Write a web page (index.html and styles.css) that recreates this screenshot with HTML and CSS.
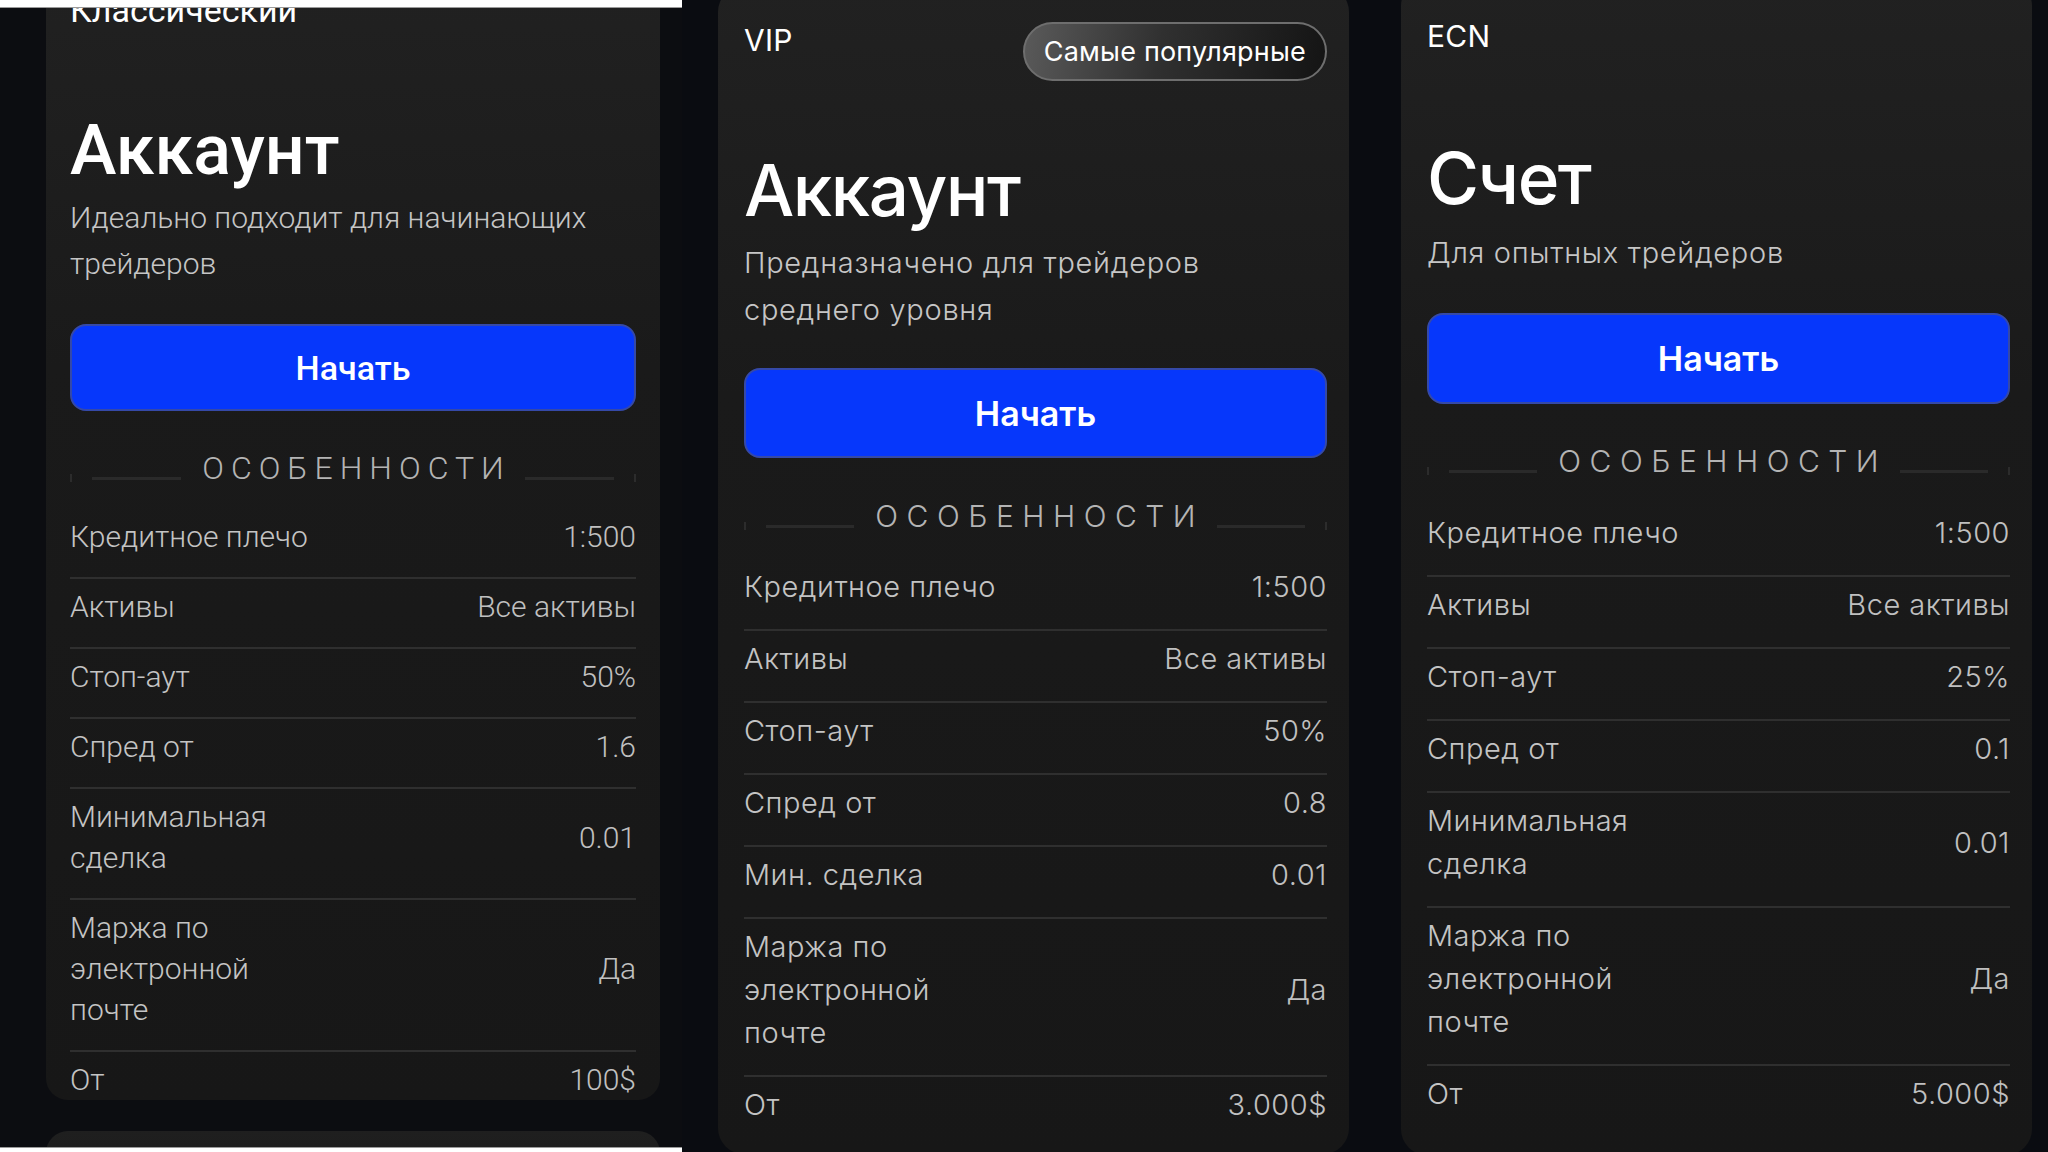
FILE: index.html
```html
<!DOCTYPE html>
<html lang="ru">
  <head>
    <meta charset="UTF-8" />
    <meta name="viewport" content="width=device-width, initial-scale=1.0" />
    <title>Типы счетов</title>
    <link rel="stylesheet" href="styles.css">
  </head>
  <body>
    <div class="screens">
      <!-- Classic account, Android screen -->
      <section class="screen screen-classic">
        <div class="bar bar-top"></div>
        <div class="plan plan-classic">
          <div class="plan-head">
            <span class="tier">Классический</span>
          </div>
          <h2 class="plan-title">Аккаунт</h2>
          <p class="plan-desc">Идеально подходит для начинающих<br>трейдеров</p>
          <a class="btn-start" href="#">Начать</a>
          <div class="features-title"><span>Особенности</span></div>
          <ul class="features">
            <li><span class="label">Кредитное плечо</span><span class="value">1:500</span></li>
            <li><span class="label">Активы</span><span class="value">Все активы</span></li>
            <li><span class="label">Стоп-аут</span><span class="value">50%</span></li>
            <li><span class="label">Спред от</span><span class="value">1.6</span></li>
            <li><span class="label">Минимальная<br>сделка</span><span class="value">0.01</span></li>
            <li><span class="label">Маржа по<br>электронной<br>почте</span><span class="value">Да</span></li>
            <li><span class="label">От</span><span class="value">100$</span></li>
          </ul>
        </div>
        <div class="plan plan-peek"></div>
        <div class="bar bar-bottom"></div>
      </section>

      <!-- VIP account -->
      <section class="screen screen-vip">
        <div class="plan plan-vip">
          <div class="plan-head">
            <span class="tier">VIP</span>
            <span class="badge">Самые популярные</span>
          </div>
          <h2 class="plan-title">Аккаунт</h2>
          <p class="plan-desc">Предназначено для трейдеров<br>среднего уровня</p>
          <a class="btn-start" href="#">Начать</a>
          <div class="features-title"><span>Особенности</span></div>
          <ul class="features">
            <li><span class="label">Кредитное плечо</span><span class="value">1:500</span></li>
            <li><span class="label">Активы</span><span class="value">Все активы</span></li>
            <li><span class="label">Стоп-аут</span><span class="value">50%</span></li>
            <li><span class="label">Спред от</span><span class="value">0.8</span></li>
            <li><span class="label">Мин. сделка</span><span class="value">0.01</span></li>
            <li><span class="label">Маржа по<br>электронной<br>почте</span><span class="value">Да</span></li>
            <li><span class="label">От</span><span class="value">3.000$</span></li>
          </ul>
        </div>
      </section>

      <!-- ECN account -->
      <section class="screen screen-ecn">
        <div class="plan plan-ecn">
          <div class="plan-head">
            <span class="tier">ECN</span>
          </div>
          <h2 class="plan-title">Счет</h2>
          <p class="plan-desc">Для опытных трейдеров</p>
          <a class="btn-start" href="#">Начать</a>
          <div class="features-title"><span>Особенности</span></div>
          <ul class="features">
            <li><span class="label">Кредитное плечо</span><span class="value">1:500</span></li>
            <li><span class="label">Активы</span><span class="value">Все активы</span></li>
            <li><span class="label">Стоп-аут</span><span class="value">25%</span></li>
            <li><span class="label">Спред от</span><span class="value">0.1</span></li>
            <li><span class="label">Минимальная<br>сделка</span><span class="value">0.01</span></li>
            <li><span class="label">Маржа по<br>электронной<br>почте</span><span class="value">Да</span></li>
            <li><span class="label">От</span><span class="value">5.000$</span></li>
          </ul>
        </div>
      </section>
    </div>
  </body>
</html>
```

FILE: styles.css
```css
* {
  box-sizing: border-box;
}
body {
  margin: 0;
  background-color: #0a0c11;
  font-family: Inter, "Noto Sans", sans-serif;
  color: #fff;
  overflow: hidden;
}
.screens {
  display: flex;
  height: 1152px;
}
.screen {
  position: relative;
  height: 1152px;
  overflow: hidden;
  display: flex;
  flex-direction: column;
}

/* white edges of the phone capture */
.bar {
  position: absolute;
  left: 0;
  width: 100%;
  background-color: #fff;
  z-index: 2;
}
.bar-top {
  top: 0;
  height: 8px;
  border-bottom: 1px solid #9a9a9a;
}
.bar-bottom {
  bottom: 0;
  height: 5px;
  border-top: 1px solid #9a9a9a;
}

/* card */
.plan {
  flex-shrink: 0;
  background: linear-gradient(180deg, #212121 0%, #1a1a1a 35%, #171717 100%);
  border-radius: 26px;
}
.plan-head {
  display: flex;
  justify-content: space-between;
  align-items: flex-start;
}
.tier {
  font-size: 30px;
  line-height: 40px;
  letter-spacing: 0.3px;
}
.plan-title {
  margin: 0;
  font-size: 71px;
  line-height: 80px;
  font-weight: 500;
  letter-spacing: -1.5px;
}
.plan-desc {
  margin: 0;
  color: #c6c6c6;
  font-size: 29px;
  font-weight: 300;
  line-height: 47px;
  letter-spacing: 0.7px;
}
.btn-start {
  display: flex;
  align-items: center;
  justify-content: center;
  height: 90px;
  background-color: #0637fb;
  border: 2px solid #3549a8;
  border-radius: 16px;
  color: #fff;
  font-size: 34px;
  font-weight: 600;
  text-decoration: none;
}
.badge {
  margin-top: 2px;
  height: 59px;
  padding: 0 19px;
  display: flex;
  align-items: center;
  border: 2px solid #6e6e6e;
  border-radius: 30px;
  background: linear-gradient(100deg, #5a5a5a 0%, #303030 45%, #141414 100%);
  font-size: 27px;
  letter-spacing: 0.2px;
}

/* "Особенности" divider */
.features-title {
  display: flex;
  align-items: center;
  gap: 21px;
  height: 40px;
  padding: 0 22px;
  color: #b4b4b4;
  font-size: 30px;
  font-weight: 300;
  letter-spacing: 8.5px;
  text-transform: uppercase;
  background:
    linear-gradient(#2c2c2c, #2c2c2c) left 26px / 2px 8px no-repeat,
    linear-gradient(#2c2c2c, #2c2c2c) right 26px / 2px 8px no-repeat;
}
.features-title span {
  margin-right: -8.5px;
}
.features-title::before,
.features-title::after {
  content: "";
  flex: 1;
  height: 3px;
  margin-top: 20px;
  background-color: #2a2a2a;
}

/* feature rows */
.features {
  list-style: none;
  margin: 0;
  padding: 0;
}
.features li {
  display: flex;
  justify-content: space-between;
  align-items: center;
  padding: 6px 0 21px;
  font-size: 29px;
  font-weight: 300;
  line-height: 43px;
  letter-spacing: 0.5px;
}
.features li + li {
  border-top: 2px solid #2f2f2f;
}
.features li:last-child {
  padding-bottom: 0;
}
.label {
  color: #c4c4c4;
}
.value {
  color: #c0c0c0;
  text-align: right;
}

/* classic screen (Android) */
.screen-classic {
  width: 682px;
  padding-left: 46px;
  background-color: #0c0d11;
  font-family: Roboto, "Noto Sans", sans-serif;
}
.plan-classic {
  width: 614px;
  margin-top: -30px;
  padding: 20px 24px 0;
  border-radius: 22px;
}
.plan-classic .tier {
  font-size: 34px;
  letter-spacing: 0;
}
.plan-classic .plan-title {
  margin-top: 80px;
  font-size: 70px;
  letter-spacing: 0;
}
.plan-classic .plan-desc {
  margin-top: 5px;
  font-size: 30px;
  line-height: 46px;
  letter-spacing: 0;
}
.plan-classic .btn-start {
  margin-top: 37px;
  height: 87px;
  font-weight: 500;
}
.plan-classic .features-title {
  margin-top: 37px;
  margin-bottom: 21px;
  font-size: 32px;
  letter-spacing: 7px;
}
.plan-classic .features-title span {
  margin-right: -7px;
}
.plan-classic .features li {
  padding: 7px 0 20px;
  font-size: 30px;
  line-height: 41px;
  letter-spacing: 0;
}
.plan-classic .features li:last-child {
  padding-bottom: 0;
}
.plan-peek {
  width: 614px;
  height: 80px;
  margin-top: 31px;
  border-radius: 22px;
  background: linear-gradient(180deg, #1f1f1f, #1a1a1a);
}

/* VIP screen */
.screen-vip {
  width: 692px;
  padding-left: 36px;
}
.plan-vip {
  width: 631px;
  margin-top: -14px;
  padding: 34px 22px 28px 26px;
}
.plan-vip .plan-title {
  margin-top: 69px;
}
.plan-vip .plan-desc {
  margin-top: 9px;
}
.plan-vip .btn-start {
  margin-top: 35px;
}
.plan-vip .features-title {
  margin-top: 38px;
  margin-bottom: 23px;
}

/* ECN screen */
.screen-ecn {
  width: 674px;
  padding-left: 27px;
}
.plan-ecn {
  width: 631px;
  margin-top: -20px;
  padding: 36px 22px 40px 26px;
}
.plan-ecn .plan-title {
  margin-top: 82px;
}
.plan-ecn .plan-desc {
  margin-top: 11px;
}
.plan-ecn .btn-start {
  margin-top: 37px;
  height: 91px;
}
.plan-ecn .features-title {
  margin-top: 37px;
  margin-bottom: 24px;
}
```
